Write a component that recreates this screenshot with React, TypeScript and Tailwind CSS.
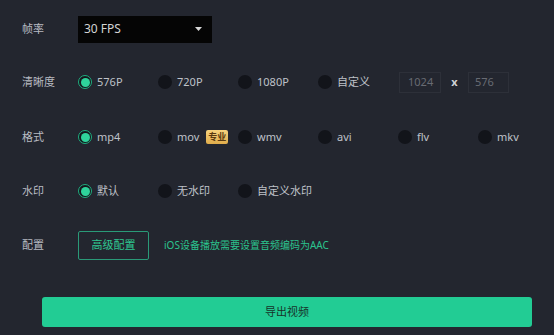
import React from "react";

const font = { fontFamily: '"Noto Sans", "Noto Sans CJK SC", sans-serif' };

function Radio({ checked }: { checked?: boolean }) {
  if (checked) {
    return (
      <span className="w-[14px] h-[14px] rounded-full border border-[#1fae80] bg-[#15171d] flex items-center justify-center shrink-0">
        <span className="w-[9px] h-[9px] rounded-full bg-[#2fd39b]" />
      </span>
    );
  }
  return <span className="w-[14px] h-[14px] rounded-full bg-[#12141a] shrink-0" />;
}

function Option({ label, checked, badge }: { label: string; checked?: boolean; badge?: boolean }) {
  return (
    <div className="w-[80px] flex items-center gap-[5px] shrink-0">
      <Radio checked={checked} />
      <span className="text-[11px] text-[#bfc2c9] whitespace-nowrap">{label}</span>
      {badge && (
        <span className="ml-[2px] px-[2px] h-[14px] leading-[14px] rounded-[2px] bg-gradient-to-b from-[#f6d37d] to-[#e0ac4a] text-[9px] font-bold text-[#5a3a10]">
          专业
        </span>
      )}
    </div>
  );
}

function Row({ label, children, className = "" }: { label: string; children: React.ReactNode; className?: string }) {
  return (
    <div className={`flex items-center h-[28px] ${className}`}>
      <div className="w-[56px] text-[11px] text-[#b8bbc2] shrink-0">{label}</div>
      <div className="flex items-center">{children}</div>
    </div>
  );
}

export default function App() {
  return (
    <div className="w-[554px] h-[335px] bg-[#23262f] px-[22px] pt-[15px] overflow-hidden" style={font}>
      <Row label="帧率">
        <div className="w-[134px] h-[27px] bg-[#050505] flex items-center justify-between pl-[6px] pr-[10px]">
          <span className="text-[12px] text-[#d4d4d4]">30 FPS</span>
          <svg width="7" height="4" viewBox="0 0 7 4">
            <path d="M0 0 L7 0 L3.5 4 Z" fill="#d8d8d8" />
          </svg>
        </div>
      </Row>

      <Row label="清晰度" className="mt-[25px]">
        <Option label="576P" checked />
        <Option label="720P" />
        <Option label="1080P" />
        <div className="w-[81px] flex items-center gap-[5px] shrink-0">
          <Radio />
          <span className="text-[11px] text-[#bfc2c9]">自定义</span>
        </div>
        <div className="w-[42px] h-[21px] border border-[#2d3039] text-[11px] text-[#686b73] flex items-center pl-[8px]">1024</div>
        <span className="w-[27px] text-center text-[11px] font-bold text-[#d0d2d6]">x</span>
        <div className="w-[41px] h-[21px] border border-[#2d3039] text-[11px] text-[#686b73] flex items-center pl-[6px]">576</div>
      </Row>

      <Row label="格式" className="mt-[27px]">
        <Option label="mp4" checked />
        <Option label="mov" badge />
        <Option label="wmv" />
        <Option label="avi" />
        <Option label="flv" />
        <Option label="mkv" />
      </Row>

      <Row label="水印" className="mt-[26px]">
        <Option label="默认" checked />
        <Option label="无水印" />
        <Option label="自定义水印" />
      </Row>

      <Row label="配置" className="mt-[26px]">
        <button className="w-[71px] h-[29px] border border-[#2a9a78] rounded-[2px] text-[11px] text-[#2fc892] bg-transparent">
          高级配置
        </button>
        <span className="ml-[15px] text-[10px] text-[#2bc48e]">iOS设备播放需要设置音频编码为AAC</span>
      </Row>

      <button className="mt-[38px] ml-[20px] w-[490px] h-[30px] rounded-[3px] bg-[#22cc94] text-[11px] text-[#17332a] flex items-center justify-center">
        导出视频
      </button>
    </div>
  );
}
